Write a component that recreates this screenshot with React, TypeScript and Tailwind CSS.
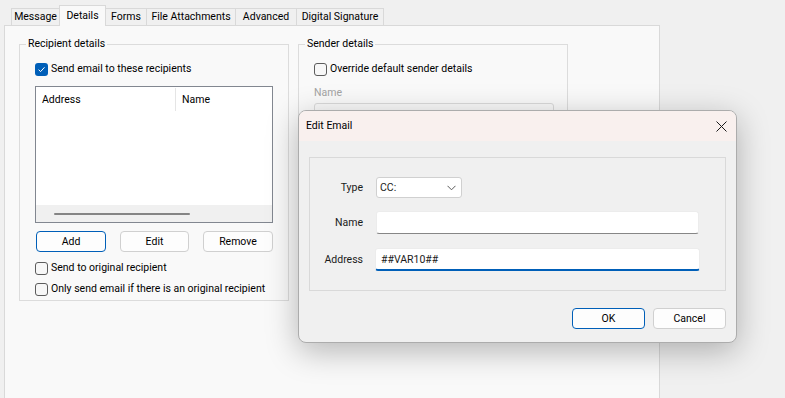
import React from "react";

function CheckBox({ checked }: { checked?: boolean }) {
  return checked ? (
    <span className="flex h-[13px] w-[13px] shrink-0 items-center justify-center rounded-[3px] bg-[#005fb8]">
      <svg width="9" height="9" viewBox="0 0 9 9">
        <path d="M1.6 4.7 L3.6 6.6 L7.5 2.3" fill="none" stroke="white" strokeWidth="1" />
      </svg>
    </span>
  ) : (
    <span className="h-[13px] w-[13px] shrink-0 rounded-[3px] border border-[#5c5c5c] bg-[#f7f7f7]" />
  );
}

function CheckRow({ checked, label, className }: { checked?: boolean; label: string; className?: string }) {
  return (
    <div className={"flex h-[16px] items-center gap-[3px] whitespace-nowrap " + (className ?? "")}>
      <CheckBox checked={checked} />
      <span>{label}</span>
    </div>
  );
}

function Tab({ label, w, selected }: { label: string; w: string; selected?: boolean }) {
  if (selected) {
    return (
      <div
        className={
          "relative z-10 -mb-px flex h-[21px] items-center justify-center whitespace-nowrap border-x border-t border-[#d9d9d9] bg-[#f9f9f9] pb-[1px] " +
          w
        }
      >
        {label}
      </div>
    );
  }
  return (
    <div
      className={
        "flex h-[17px] items-center justify-center whitespace-nowrap border-t border-r border-[#d9d9d9] bg-[#f0f0f0] " + w
      }
    >
      {label}
    </div>
  );
}

function Btn({ label, w, primary }: { label: string; w: string; primary?: boolean }) {
  return (
    <div
      className={
        "flex h-[21px] items-center justify-center rounded-[4px] border bg-[#fdfdfd] " +
        (primary ? "border-[#005fb8] " : "border-[#d0d0d0] ") +
        w
      }
    >
      {label}
    </div>
  );
}

export default function App() {
  return (
    <div className="relative h-[398px] w-[785px] overflow-hidden bg-[#f0f0f0] font-['Roboto',sans-serif] text-[10.5px] leading-[16px] text-black">
      {/* Tabs */}
      <div className="flex h-[25px] items-end pl-[11px] pt-[5px]">
        <div className="flex h-[17px] w-[49px] items-center justify-center border-x border-t border-[#d9d9d9] bg-[#f0f0f0]">
          Message
        </div>
        <Tab label="Details" w="w-[47px] -ml-px" selected />
        <Tab label="Forms" w="w-[41px]" />
        <Tab label="File Attachments" w="w-[89px]" />
        <Tab label="Advanced" w="w-[61px]" />
        <Tab label="Digital Signature" w="w-[87px]" />
      </div>

      {/* Tab panel */}
      <div className="ml-[4px] h-[373px] w-[656px] border border-b-0 border-[#d9d9d9] bg-[#f9f9f9] pt-[10px]">
        <div className="ml-[14px] flex gap-[9px]">
          {/* Recipient details */}
          <fieldset className="w-[270px] min-w-0 border border-[#dcdcdc] px-[15px] pb-[3px]">
            <legend className="-ml-[9px] px-[2px]">Recipient details</legend>
            <CheckRow checked label="Send email to these recipients" className="mt-[9px]" />
            <div className="mt-[9px] flex h-[137px] w-[238px] flex-col border border-[#828790] bg-white">
              <div className="flex h-[25px]">
                <div className="my-[1px] flex w-[140px] items-center border-r border-[#e5e5e5] pl-[6px]">Address</div>
                <div className="flex items-center pl-[6px]">Name</div>
              </div>
              <div className="flex-1" />
              <div className="flex h-[17px] items-center bg-[#f0f0f0] pl-[18px]">
                <div className="h-[2px] w-[136px] rounded-full bg-[#858585]" />
              </div>
            </div>
            <div className="mt-[8px] flex gap-[14px] pl-[1px]">
              <Btn label="Add" w="w-[70px]" primary />
              <Btn label="Edit" w="w-[69px]" />
              <Btn label="Remove" w="w-[70px]" />
            </div>
            <CheckRow label="Send to original recipient" className="mt-[8px]" />
            <CheckRow label="Only send email if there is an original recipient" className="mt-[5px]" />
          </fieldset>

          {/* Sender details */}
          <fieldset className="w-[270px] min-w-0 border border-[#dcdcdc] px-[15px] pb-[3px]">
            <legend className="-ml-[9px] px-[2px]">Sender details</legend>
            <CheckRow label="Override default sender details" className="mt-[9px]" />
            <div className="mt-[8px] h-[16px] text-[#a3a3a3]">Name</div>
            <div className="mt-[2px] h-[22px] w-[240px] rounded-[3px] border border-[#dadada] bg-[#f9f9f9]" />
          </fieldset>
        </div>
      </div>

      {/* Edit Email dialog */}
      <div className="absolute left-[298px] top-[110px] flex h-[233px] w-[439px] flex-col overflow-hidden rounded-[8px] border border-[#acacac] bg-[#f0f0f0] shadow-[0_8px_32px_rgba(0,0,0,0.28)]">
        <div className="flex h-[30px] shrink-0 items-center justify-between bg-[#f9f0ee] pl-[7px] pr-[9px]">
          <span>Edit Email</span>
          <svg width="11" height="11" viewBox="0 0 11 11">
            <path d="M0.5 0.5 L10.5 10.5 M10.5 0.5 L0.5 10.5" stroke="#1a1a1a" strokeWidth="1" fill="none" />
          </svg>
        </div>
        <div className="px-[10px] pt-[16px]">
          <div className="h-[134px] border border-[#d9d9d9] pt-[19px] text-[#1a1a1a]">
            <div className="flex h-[21px] items-center gap-[13px]">
              <div className="w-[53px] text-right">Type</div>
              <div className="flex h-[21px] w-[86px] items-center justify-between rounded-[3px] border border-[#d0d0d0] bg-white pl-[3px] pr-[5px]">
                <span>CC:</span>
                <svg width="9" height="6" viewBox="0 0 9 6">
                  <path d="M0.5 0.8 L4.5 4.8 L8.5 0.8" stroke="#5a5a5a" strokeWidth="1" fill="none" />
                </svg>
              </div>
            </div>
            <div className="mt-[13px] flex h-[23px] items-center gap-[13px]">
              <div className="w-[53px] text-right">Name</div>
              <div className="h-[23px] w-[323px] rounded-[3px] border border-[#ececec] border-b-[#868686] bg-white" />
            </div>
            <div className="mt-[14px] flex h-[23px] items-center gap-[12px]">
              <div className="w-[53px] text-right">Address</div>
              <div className="flex h-[23px] w-[325px] items-center rounded-[3px] border border-[#ececec] border-b-2 border-b-[#005fb8] bg-white pl-[5px] pt-[1px]">
                ##VAR10##
              </div>
            </div>
          </div>
          <div className="mt-[17px] flex justify-end gap-[8px]">
            <Btn label="OK" w="w-[73px]" primary />
            <Btn label="Cancel" w="w-[73px]" />
          </div>
        </div>
      </div>
    </div>
  );
}
